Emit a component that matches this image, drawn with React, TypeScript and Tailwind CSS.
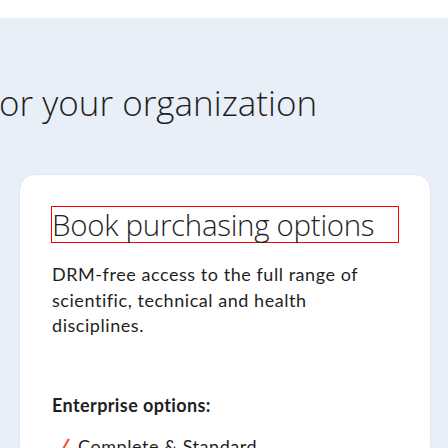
import React from 'react';

const Check: React.FC = () => (
  <svg className="mt-[4px] h-[20px] w-[18px] shrink-0" viewBox="0 0 18 20" fill="none">
    <path d="M1.5 11 L7 18 L16.5 1.5" stroke="#ff4c1f" strokeWidth="2" strokeLinecap="round" strokeLinejoin="round" />
  </svg>
);

export default function App() {
  return (
    <div className="h-[448px] w-[448px] overflow-hidden bg-white text-[#1f1f1f]">
      <div className="h-[18px] bg-white" />
      <section className="h-[430px] bg-[#e9eff8] pt-[63px]">
        {/* Section heading, cut off on the left */}
        <h1 className="whitespace-nowrap text-[35px] leading-[44px] font-light font-['Open_Sans',sans-serif] -ml-px">
          or your organization
        </h1>

        {/* Purchase card */}
        <div className="ml-[19px] mt-[49px] w-[412px] rounded-[16px] border border-[#e3e6eb] bg-white px-[32px] pt-[31px]">
          <h2 className="border border-[#ff0000] -mx-px text-[29.5px] leading-[35px] tracking-[-0.3px] font-light font-['Open_Sans',sans-serif]">
            Book purchasing options
          </h2>
          <p className="mt-[19px] text-[18px] leading-[25.5px] tracking-[0.55px] font-['Lato',sans-serif]">
            DRM-free access to the full range of scientific, technical and health disciplines.
          </p>
          <p className="mt-[54px] text-[18px] leading-[25.5px] tracking-[0.4px] font-bold font-['Lato',sans-serif]">
            Enterprise options:
          </p>
          <ul className="mt-[16px] flex flex-col gap-2 font-['Lato',sans-serif] text-[18px] leading-[25.5px] tracking-[0.55px]">
            <li className="flex items-start gap-[8px]">
              <Check />
              <span>Complete &amp; Standard</span>
            </li>
          </ul>
        </div>
      </section>
    </div>
  );
}
